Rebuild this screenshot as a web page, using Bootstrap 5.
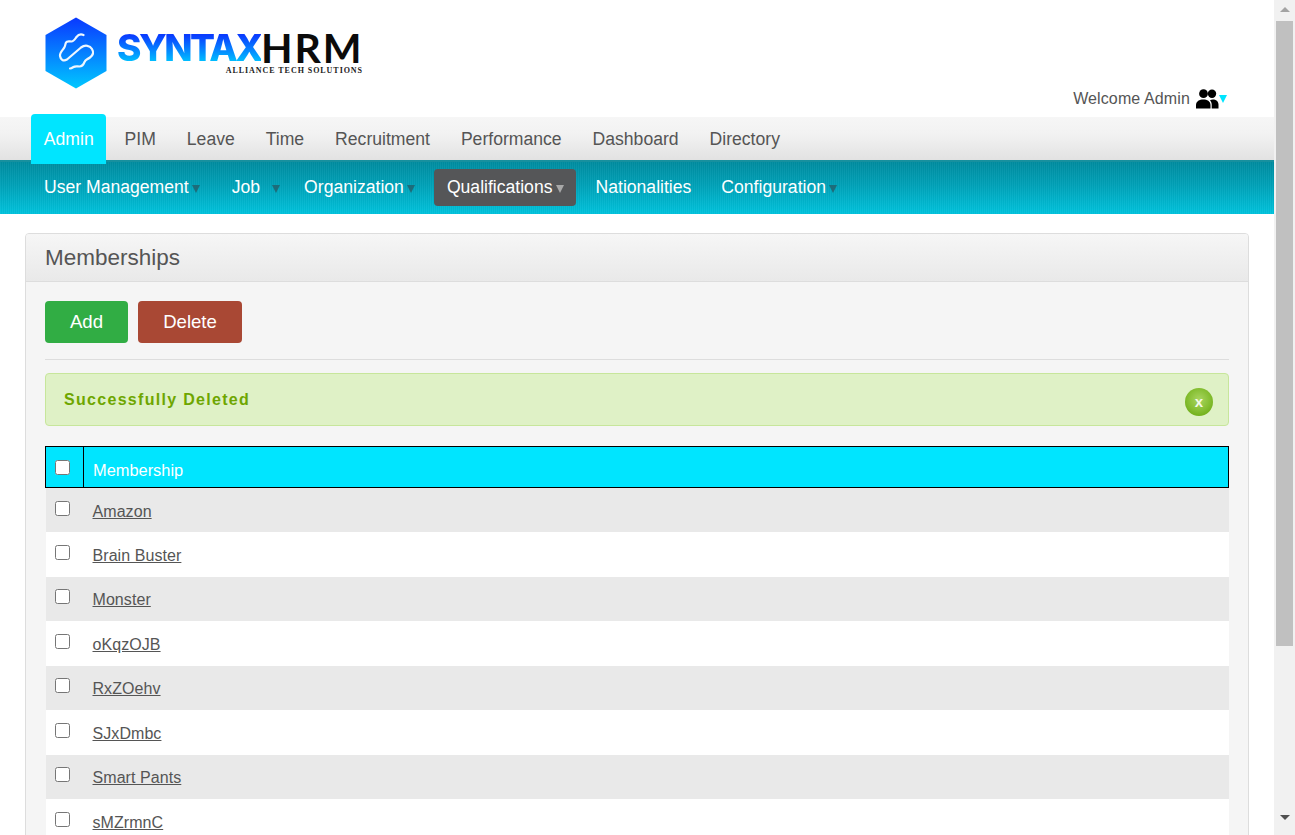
<!DOCTYPE html>
<html lang="en">
<head>
<meta charset="utf-8">
<title>Memberships</title>
<link href="https://cdn.jsdelivr.net/npm/bootstrap@5.3.0/dist/css/bootstrap.min.css" rel="stylesheet">
<style>
html,body{height:100%;overflow:hidden;background:#fff}
body{font-family:"Liberation Sans",Arial,sans-serif;font-size:16px;color:#555}
.app-shell{height:835px}
.app-main{width:1274px;height:835px;overflow:hidden;flex:none}
.site-head{height:117px;padding:17px 46px 0 45px}
.logo-texts{margin-left:10px;padding-top:13px;width:246px}
.logo-line{height:36px}
.logo-syntax{font-family:Inter,"Liberation Sans",sans-serif;font-weight:800;font-size:37px;line-height:36px;letter-spacing:-2.5px;background:linear-gradient(180deg,#0a3cff 15%,#00c4ff 90%);-webkit-background-clip:text;background-clip:text;color:transparent}
.logo-hrm{font-family:Lato,"Liberation Sans",sans-serif;font-weight:700;font-size:41px;line-height:36px;color:#0b0b0b;letter-spacing:1.9px}
.logo-tag{font-family:"Liberation Serif",serif;font-weight:700;font-size:8px;line-height:8px;color:#222;letter-spacing:.95px;text-align:right;white-space:nowrap;margin-top:1px}
.welcome{margin-top:63px;line-height:38px;height:38px;margin-right:1px}
.welcome-txt{letter-spacing:.12px}
.user-ico{margin-left:6px}
.tri{display:inline-block;flex:none;width:0;height:0;border-style:solid;border-color:currentColor transparent transparent;border-width:8px 4.5px 0}
.tri-cyan{color:#00e5ff;margin-left:-1px}
.main-bar{height:43px;padding-left:31px;background:linear-gradient(180deg,#f6f6f6 0,#f2f2f2 40%,#e2e2e2 100%);gap:5.35px}
.main-bar .nav-link{height:43px;line-height:45px;padding:0 12.8px;font-size:17.6px;color:#555}
.main-bar .nav-link.active-tab{height:50px;line-height:50px;margin-top:-3px;position:relative;z-index:2;background:#00e5ff;color:#fff;border-radius:4px 4px 0 0}
.sub-bar{height:54px;padding:9px 0 0 31px;gap:8px;border-top:2px solid #17909e;background:repeating-linear-gradient(90deg,rgba(255,255,255,.035) 0 1px,rgba(0,0,0,.025) 1px 2px),linear-gradient(180deg,#008ca0 0,#00a2b8 45%,#00c3dd 100%)}
.sub-bar .nav-link{height:37px;margin-top:-2px;line-height:37px;padding:0 10px 0 13px;font-size:17.6px;color:#fff;border-radius:4px;display:flex;align-items:center}
.sub-bar .nav-link .tri{color:#1d6c7a;margin-left:3px;margin-top:2px}
.sub-bar .nav-link.active-sub{background:#555658;padding-right:12px;margin-right:-1px}
.sub-bar .nav-link.active-sub .tri{color:#a8a8a8}
.sub-bar .nav-link.plain-sub{padding-right:9px}
.tri-job{margin-left:12px!important}
.sub-first{margin-right:1px}
.sub-job{margin-right:-7px}
.sub-org{margin-right:1px}
.panel-wrap{padding:19px 25px 0}
.panel{--bs-card-border-color:#ddd;--bs-card-border-radius:4px;--bs-card-inner-border-radius:3px;background:#f5f5f5}
.panel .card-header{height:48px;padding:0 19px;line-height:47px;font-size:22.5px;color:#555;background:linear-gradient(180deg,#f6f6f6,#e9e9e9);border-bottom:1px solid #ddd}
.panel .card-body{padding:19px 19px 0}
.act-row{gap:10px}
.act-btn{height:42px;line-height:40px;padding:0;font-size:18.6px;color:#fff;border-radius:4px;border:1px solid transparent}
.act-add,.act-add:hover{background:#31ad44;width:83px;color:#fff}
.act-del,.act-del:hover{background:#a94834;width:104px;color:#fff}
.panel-rule{margin:16px 0 13px;border-top:1px solid #ddd;opacity:1}
.done-alert{height:53px;padding:0 15px 0 18px;margin-bottom:20px;background:#dff1c6;border:1px solid #c7e69b;border-radius:4px;color:#6ea600;font-weight:700;letter-spacing:1.3px;font-size:16px}
.done-close{width:28px;height:28px;border-radius:50%;border:0;padding:0;font-size:15px;line-height:26px;letter-spacing:0;font-weight:700;color:#f4f9e8;background:radial-gradient(circle at 50% 42%,#a9d560 0,#86bf33 50%,#5fa205 100%);margin-top:4px}
.member-table{width:1184px;table-layout:fixed;border-collapse:collapse;margin:0;--bs-table-bg:transparent}
.member-table th,.member-table td{padding:0 0 0 9px;border:0;vertical-align:middle;font-size:16px;font-weight:400;box-shadow:none}
.member-table thead th{height:41px;background:#00e5ff;color:#fff;border:1px solid #000;font-size:16.4px;padding-top:6px;--bs-table-bg:#00e5ff}
.member-table thead th:first-child{width:38px;padding:0 0 0 9px}
.member-table tbody td{height:44.5px;background:#fff;color:#555;padding-top:3px;letter-spacing:.07px}
.member-table tbody td:first-child{padding:0 0 0 9px}
.member-table tbody tr:nth-child(odd) td{background:#e9e9e9}
.member-table a{color:#555}
.member-table input{width:15px;height:15px;margin:0;display:block}
.member-table tbody input{position:relative;top:-2px}
.fake-scroll{width:21px;height:835px;flex:none;background:#f1f1f1;padding:7px 2px 0}
.sb-up{width:0;height:0;border:solid transparent;border-width:0 5px 5px;border-bottom-color:#a3a3a3;margin:0 auto 9px}
.sb-thumb{height:625px;background:#c0c0c0}
.sb-down{width:0;height:0;border:solid transparent;border-width:5px 5px 0;border-top-color:#505050;margin:169px auto 0}
</style>
</head>
<body>
<div class="app-shell d-flex">
  <div class="app-main">
    <header class="site-head d-flex justify-content-between align-items-start">
      <a class="d-flex text-decoration-none" href="#">
        <svg width="62" height="72" viewBox="0 0 62 72" aria-hidden="true">
          <defs><linearGradient id="hexg" x1="0" y1="0" x2="0" y2="1"><stop offset="0" stop-color="#0a38ff"/><stop offset="1" stop-color="#00c8ff"/></linearGradient></defs>
          <path d="M31 0.5 61.5 18V54L31 71.5 .5 54V18Z" fill="url(#hexg)"/>
          <path d="M38.5 18C35 16.5 33 18 31.5 20S28.5 24.5 26.5 24.5 22 23.5 21 25.5 20.5 29 19 31 14.5 36 15 39 18 45 22 42.5L36 30.5C40 27.5 45 28.5 47 32S48.5 38 45 40.5 40.5 42.5 39.5 45 37 49.5 34.5 49.5 30 49 28.5 50 26 51.5 25 51.5" fill="none" stroke="#eef7ff" stroke-width="2.2" stroke-linecap="round" stroke-linejoin="round"/>
        </svg>
        <div class="logo-texts">
          <div class="logo-line d-flex"><span class="logo-syntax">SYNTAX</span><span class="logo-hrm">HRM</span></div>
          <div class="logo-tag">ALLIANCE TECH SOLUTIONS</div>
        </div>
      </a>
      <div class="welcome d-flex align-items-center">
        <span class="welcome-txt">Welcome Admin</span>
        <svg class="user-ico" width="24" height="20" viewBox="0 0 24 20" aria-hidden="true"><circle cx="7.5" cy="4.7" r="4.4" fill="#000"/><circle cx="16" cy="4.7" r="4.2" fill="#000"/><path d="M0 19.5V16C0 12.3 3.5 10.5 7.3 10.5S14.5 12.3 14.5 16V19.5Z" fill="#000"/><path d="M15.7 19.5V15.5C15.7 13.8 15 12.4 14 11.2 14.9 10.8 15.8 10.5 16.8 10.5 20 10.5 22.5 12.4 22.5 15.5V19.5Z" fill="#000"/></svg>
        <span class="tri tri-cyan"></span>
      </div>
    </header>

    <nav class="main-bar nav flex-nowrap">
      <a class="nav-link active-tab" href="#">Admin</a>
      <a class="nav-link" href="#">PIM</a>
      <a class="nav-link" href="#">Leave</a>
      <a class="nav-link" href="#">Time</a>
      <a class="nav-link" href="#">Recruitment</a>
      <a class="nav-link" href="#">Performance</a>
      <a class="nav-link" href="#">Dashboard</a>
      <a class="nav-link" href="#">Directory</a>
    </nav>
    <nav class="sub-bar nav flex-nowrap">
      <a class="nav-link sub-first" href="#">User Management<span class="tri"></span></a>
      <a class="nav-link sub-job" href="#">Job<span class="tri tri-job"></span></a>
      <a class="nav-link sub-org" href="#">Organization<span class="tri"></span></a>
      <a class="nav-link active-sub" href="#">Qualifications<span class="tri"></span></a>
      <a class="nav-link plain-sub" href="#">Nationalities</a>
      <a class="nav-link" href="#">Configuration<span class="tri"></span></a>
    </nav>

    <div class="panel-wrap">
      <section class="card panel">
        <div class="card-header">Memberships</div>
        <div class="card-body">
          <div class="d-flex act-row">
            <button type="button" class="btn act-btn act-add">Add</button>
            <button type="button" class="btn act-btn act-del">Delete</button>
          </div>
          <hr class="panel-rule">
          <div class="done-alert d-flex justify-content-between align-items-center" role="alert">
            <span>Successfully Deleted</span>
            <button type="button" class="done-close" aria-label="Close">x</button>
          </div>
          <table class="table member-table">
            <thead>
              <tr><th><input type="checkbox" aria-label="Select all"></th><th>Membership</th></tr>
            </thead>
            <tbody>
              <tr><td><input type="checkbox" aria-label="Amazon"></td><td><a href="#">Amazon</a></td></tr>
              <tr><td><input type="checkbox" aria-label="Brain Buster"></td><td><a href="#">Brain Buster</a></td></tr>
              <tr><td><input type="checkbox" aria-label="Monster"></td><td><a href="#">Monster</a></td></tr>
              <tr><td><input type="checkbox" aria-label="oKqzOJB"></td><td><a href="#">oKqzOJB</a></td></tr>
              <tr><td><input type="checkbox" aria-label="RxZOehv"></td><td><a href="#">RxZOehv</a></td></tr>
              <tr><td><input type="checkbox" aria-label="SJxDmbc"></td><td><a href="#">SJxDmbc</a></td></tr>
              <tr><td><input type="checkbox" aria-label="Smart Pants"></td><td><a href="#">Smart Pants</a></td></tr>
              <tr><td><input type="checkbox" aria-label="sMZrmnC"></td><td><a href="#">sMZrmnC</a></td></tr>
            </tbody>
          </table>
        </div>
      </section>
    </div>
  </div>
  <div class="fake-scroll" aria-hidden="true">
    <div class="sb-up"></div>
    <div class="sb-thumb"></div>
    <div class="sb-down"></div>
  </div>
</div>
<script src="https://cdn.jsdelivr.net/npm/bootstrap@5.3.0/dist/js/bootstrap.bundle.min.js"></script>
</body>
</html>
